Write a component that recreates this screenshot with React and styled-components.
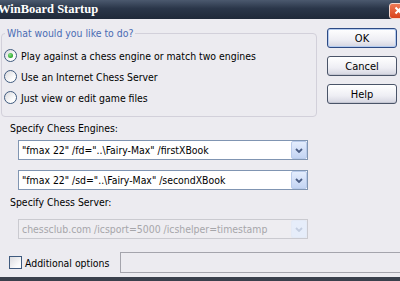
import React, { useState } from "react";
import styled, { createGlobalStyle } from "styled-components";

const GlobalStyle = createGlobalStyle`
  html, body {
    margin: 0;
    padding: 0;
    background: #ecebf0;
  }
  body {
    overflow: hidden;
  }
`;

const Window = styled.div`
  width: 400px;
  height: 281px;
  display: flex;
  flex-direction: column;
  background: #ecebf0;
  overflow: hidden;
  font-family: "DejaVu Sans Condensed", "Liberation Sans", sans-serif;
  font-size: 10.4px;
  color: #000;
`;

const TitleBar = styled.div`
  height: 19px;
  flex-shrink: 0;
  display: flex;
  align-items: center;
  justify-content: space-between;
  background: linear-gradient(#4b596e, #2a3649 45%, #1f2939);
  overflow: hidden;
`;

const Title = styled.span`
  margin-left: -2px;
  font-family: "Liberation Serif", serif;
  font-weight: bold;
  font-size: 12.5px;
  color: #fff;
  white-space: nowrap;
`;

const CloseBox = styled.div`
  width: 17px;
  height: 14px;
  margin-right: -8px;
  margin-top: 2px;
  border-radius: 3px;
  border: 1px solid #f4d8d0;
  background: linear-gradient(#ee7a56, #d9431c);
  display: flex;
  align-items: center;
  justify-content: center;
`;

const Body = styled.div`
  flex: 1;
  display: flex;
  flex-direction: column;
  padding: 8px 0 0 1px;
`;

const TopRow = styled.div`
  display: flex;
  align-items: flex-start;
  gap: 10px;
`;

const Group = styled.fieldset`
  box-sizing: border-box;
  width: 316px;
  height: 90px;
  margin: 0;
  padding: 5px 0 0 2px;
  border: 1px solid #d2d0da;
  border-radius: 4px;
  display: flex;
  flex-direction: column;
`;

const Legend = styled.legend`
  padding: 0 2px;
  margin-left: 1px;
  line-height: 13px;
  color: #4a6cb3;
`;

const RadioRow = styled.label`
  height: 21px;
  display: flex;
  align-items: center;
  gap: 4px;
  white-space: nowrap;
`;

const RadioDot = styled.span`
  box-sizing: border-box;
  width: 13px;
  height: 13px;
  flex-shrink: 0;
  border-radius: 50%;
  border: 1px solid #3f5a7e;
  background: linear-gradient(135deg, #d8d8dc, #fdfdfd 70%);
  display: flex;
  align-items: center;
  justify-content: center;

  &::after {
    content: "";
    width: 5px;
    height: 5px;
    border-radius: 50%;
    background: ${(p) => (p.$checked ? "radial-gradient(circle at 40% 35%, #8be28a, #2ba72b 70%)" : "transparent")};
  }
`;

const ButtonColumn = styled.div`
  display: flex;
  flex-direction: column;
  gap: 8px;
  margin-top: 1px;
`;

const DialogButton = styled.button`
  box-sizing: border-box;
  width: 70px;
  height: 20px;
  padding: 0;
  border: 1px solid ${(p) => (p.$default ? "#2d4a84" : "#4a5468")};
  border-radius: 3px;
  background: linear-gradient(#ffffff, #eeeef4 60%, #d4d5e0);
  box-shadow: ${(p) => (p.$default ? "inset 0 0 0 1px #b4cbef" : "inset 0 -1px 0 #c4c6d2")};
  font: inherit;
  font-size: 11px;
  color: #000;
`;

const FieldLabel = styled.div`
  line-height: 12px;
  margin: ${(p) => p.$top}px 0 0 9px;
  white-space: nowrap;
`;

const Combo = styled.div`
  box-sizing: border-box;
  width: 290px;
  height: 20px;
  margin: ${(p) => p.$top}px 0 0 17px;
  display: flex;
  align-items: stretch;
  border: 1px solid ${(p) => (p.$disabled ? "#cacad0" : "#8095b2")};
  background: ${(p) => (p.$disabled ? "#eeedf1" : "#fff")};
`;

const ComboText = styled.div`
  flex: 1;
  display: flex;
  align-items: center;
  padding-left: 3px;
  white-space: nowrap;
  overflow: hidden;
  color: ${(p) => (p.$disabled ? "#a6a6aa" : "#000")};
`;

const DropButton = styled.div`
  width: 16px;
  flex-shrink: 0;
  display: flex;
  align-items: center;
  justify-content: center;
  border-radius: 2px;
  border: 1px solid ${(p) => (p.$disabled ? "#e4eaf6" : "#b9cbeb")};
  box-sizing: border-box;
  background: ${(p) =>
    p.$disabled ? "#e6edfa" : "linear-gradient(#e4edfd, #c3d4f3)"};
`;

const OptionsRow = styled.div`
  height: 21px;
  margin-top: 13px;
  display: flex;
  align-items: center;
  padding-left: 8px;
`;

const CheckBox = styled.span`
  box-sizing: border-box;
  width: 13px;
  height: 13px;
  flex-shrink: 0;
  border: 1px solid #3f5a7e;
  background: linear-gradient(135deg, #dcdce0, #fbfbfb 75%);
`;

const CheckLabel = styled.span`
  margin-left: 3px;
  width: 95px;
  flex-shrink: 0;
  white-space: nowrap;
`;

const OptionsBox = styled.div`
  box-sizing: border-box;
  width: 300px;
  height: 21px;
  flex-shrink: 0;
  border: 1px solid #a4a4ac;
  background: #ecebf0;
`;

const BottomEdge = styled.div`
  height: 4px;
  flex-shrink: 0;
  background: #3a404c;
`;

function Chevron({ disabled }) {
  return (
    <svg width="8" height="5" viewBox="0 0 8 5">
      <path
        d="M1 1 L4 4 L7 1"
        fill="none"
        stroke={disabled ? "#c3cde0" : "#4c5f86"}
        strokeWidth="1.8"
      />
    </svg>
  );
}

const choices = [
  "Play against a chess engine or match two engines",
  "Use an Internet Chess Server",
  "Just view or edit game files",
];

export default function App() {
  const [mode, setMode] = useState(0);

  return (
    <Window>
      <GlobalStyle />
      <TitleBar>
        <Title>WinBoard Startup</Title>
        <CloseBox>
          <svg width="9" height="9" viewBox="0 0 9 9">
            <path d="M1.5 1.5 L7.5 7.5 M7.5 1.5 L1.5 7.5" stroke="#fff" strokeWidth="2" />
          </svg>
        </CloseBox>
      </TitleBar>
      <Body>
        <TopRow>
          <Group>
            <Legend>What would you like to do?</Legend>
            {choices.map((c, i) => (
              <RadioRow key={c} onClick={() => setMode(i)}>
                <RadioDot $checked={mode === i} />
                {c}
              </RadioRow>
            ))}
          </Group>
          <ButtonColumn>
            <DialogButton $default>OK</DialogButton>
            <DialogButton>Cancel</DialogButton>
            <DialogButton>Help</DialogButton>
          </ButtonColumn>
        </TopRow>

        <FieldLabel $top={5}>Specify Chess Engines:</FieldLabel>
        <Combo $top={6}>
          <ComboText>"fmax 22" /fd="..\Fairy-Max" /firstXBook</ComboText>
          <DropButton>
            <Chevron />
          </DropButton>
        </Combo>
        <Combo $top={10}>
          <ComboText>"fmax 22" /sd="..\Fairy-Max" /secondXBook</ComboText>
          <DropButton>
            <Chevron />
          </DropButton>
        </Combo>

        <FieldLabel $top={6}>Specify Chess Server:</FieldLabel>
        <Combo $top={11} $disabled>
          <ComboText $disabled>chessclub.com /icsport=5000 /icshelper=timestamp</ComboText>
          <DropButton $disabled>
            <Chevron disabled />
          </DropButton>
        </Combo>

        <OptionsRow>
          <CheckBox />
          <CheckLabel>Additional options</CheckLabel>
          <OptionsBox />
        </OptionsRow>
      </Body>
      <BottomEdge />
    </Window>
  );
}
